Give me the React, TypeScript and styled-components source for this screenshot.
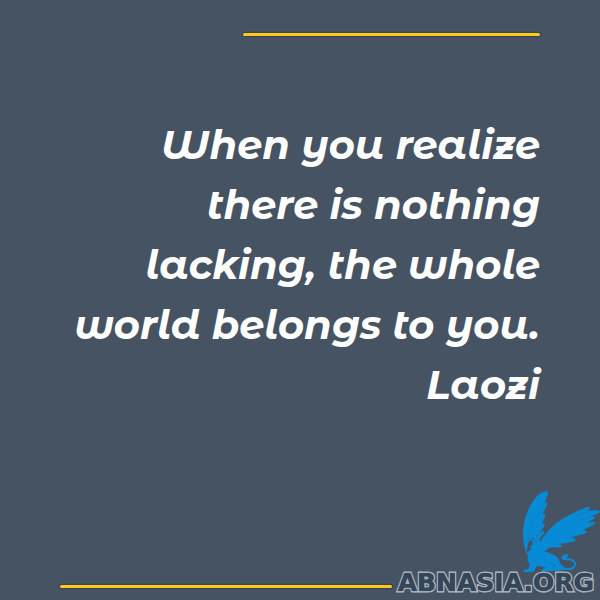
import React from "react";
import styled, { createGlobalStyle } from "styled-components";

const GlobalStyle = createGlobalStyle`
  body {
    margin: 0;
    background: #465362;
  }
`;

const Card = styled.main`
  box-sizing: border-box;
  min-height: 100vh;
  display: flex;
  flex-direction: column;
  padding: 33px 0 8px 60px;
  background: #465362;
  color: #ffffff;
  font-family: "Montserrat Alternates", Inter, sans-serif;
`;

const Rule = styled.div<{ $place: "top" | "bottom" }>`
  height: 3px;
  border-radius: 2px;
  background: #fccb1a;
  box-shadow: 0 0 1px 1px #34445a;
  ${({ $place }) =>
    $place === "top"
      ? "width: 55%; align-self: flex-end; margin-right: 60px;"
      : "flex: 1; margin-bottom: 4px;"}
`;

const Quote = styled.blockquote`
  flex: 1;
  margin: 79px 60px 0 0;
  font-size: 40px;
  font-style: italic;
  font-weight: 700;
  line-height: 60px;
  text-align: right;
`;

const Line = styled.p`
  margin: 0;
`;

const Author = styled.cite`
  display: block;
`;

const Footer = styled.footer`
  display: flex;
  align-items: flex-end;
  gap: 6px;
`;

const Brand = styled.div`
  display: flex;
  flex-direction: column;
  align-items: flex-end;
  padding-right: 6px;
`;

const Emblem = styled.svg`
  display: block;
  width: 78px;
  height: 83px;
  margin-right: -6px;
`;

const Wordmark = styled.span`
  font-family: "DejaVu Sans", sans-serif;
  font-size: 25px;
  font-weight: 700;
  line-height: 19px;
  color: #34465a;
  -webkit-text-stroke: 3px #b4b9c1;
  paint-order: stroke fill;
  text-shadow: 0 0 1px #2b3d55;
`;

function Griffin() {
  return (
    <Emblem viewBox="66 30 234 248" fill="#078bd7" role="img" aria-label="Griffin">
      <path d="M140 33C121 33 103 53 91 76C77 103 67 139 69 169C70 191 75 208 80 222C80 207 83 193 88 182L98 172L117 177L131 161C134 156 132 152 128 153L122 156L132 139C136 132 135 127 130 130L125 132L134 111C137 104 135 99 130 102L127 104L140 77C144 69 142 64 137 68L133 71L141 49C145 40 144 34 140 33Z" />
      <path d="M117 191C132 165 151 140 177 123C199 108 230 92 258 82C265 79 270 81 269 86L263 91L291 90C300 90 303 96 294 100L273 109L278 109C286 108 286 113 279 118L260 128L279 125C287 124 286 130 278 135L248 150L255 152C263 153 261 159 253 161L225 168L211 172L222 174C230 176 229 182 220 184L193 190L174 191L185 195C187 200 181 203 173 202L157 201C145 201 139 208 132 216L112 213Z" />
      <path d="M91 181C95 174 102 172 109 174L116 177L122 175L118 182L123 187L122 203L133 215C150 217 168 225 176 237C179 248 184 257 194 262L196 268L178 271L128 274C122 273 124 267 130 265L138 263C130 260 121 258 112 256L105 268L101 275L74 276C68 275 69 270 75 269L86 266L89 249L82 243L84 229L80 218L93 207L90 199L98 191L97 184Z" />
      <path d="M178 259C190 267 214 271 222 260C230 249 221 238 207 237C199 237 194 239 188 235" fill="none" stroke="#078bd7" strokeWidth="6" strokeLinecap="round" />
      <path d="M184 234C186 224 193 224 204 220C203 228 203 234 190 237Z" />
      <g fill="none" stroke="#465362" strokeWidth="1" strokeLinecap="round">
        <path d="M84 179Q87 151 101 126M108 171L120 157M116 105Q122 91 129 78" />
        <path d="M232 108L262 92M243 119L270 110" />
        <path d="M94 181L104 178L113 181M101 186L110 184M84 221Q89 204 98 193M151 247Q165 249 165 262" />
      </g>
    </Emblem>
  );
}

export default function App() {
  return (
    <>
      <GlobalStyle />
      <Card>
        <Rule $place="top" />
        <Quote>
          <Line>When you realize there is nothing lacking, the whole world belongs to you.</Line>
          <Author>Laozi</Author>
        </Quote>
        <Footer>
          <Rule $place="bottom" />
          <Brand>
            <Griffin />
            <Wordmark>ABNASIA.ORG</Wordmark>
          </Brand>
        </Footer>
      </Card>
    </>
  );
}
